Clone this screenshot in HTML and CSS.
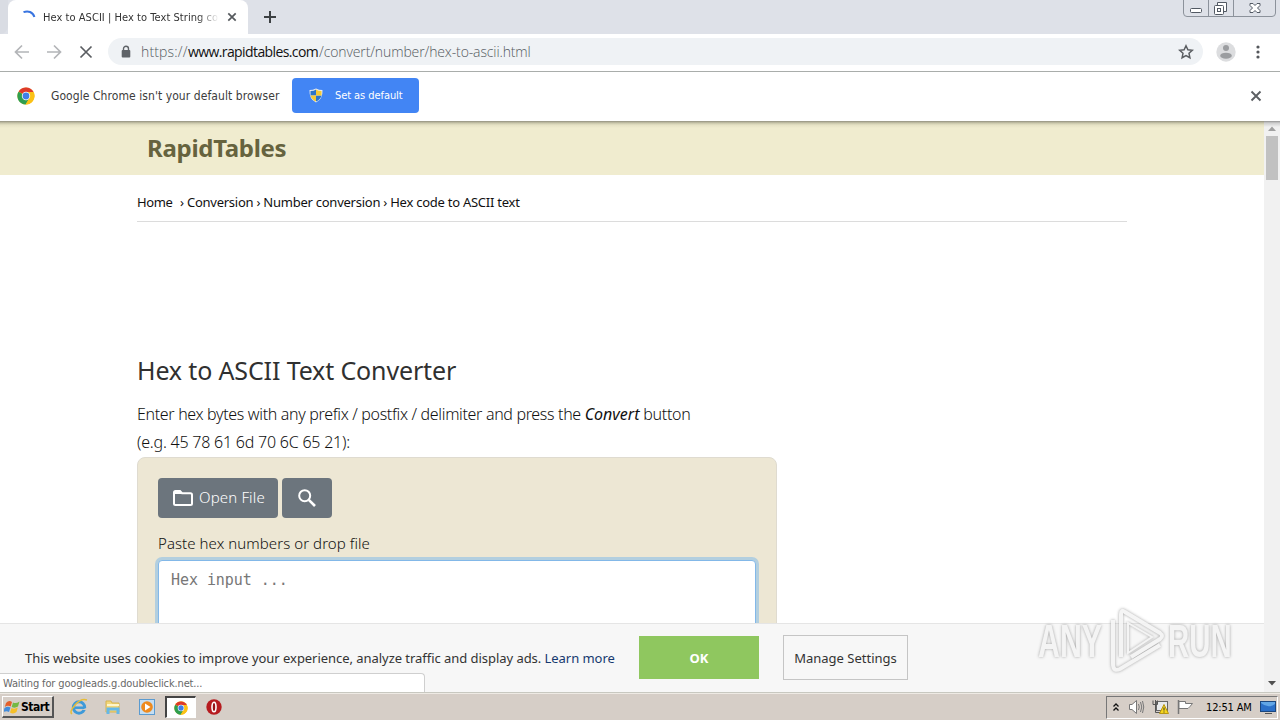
FILE: index.html
```html
<!DOCTYPE html>
<html lang="en">
<head>
<meta charset="utf-8">
<title>Hex to ASCII | Hex to Text String converter</title>
<link rel="stylesheet" href="styles.css">
</head>
<body>
<svg class="defs" width="0" height="0">
  <symbol id="chrome" viewBox="0 0 18 18">
    <circle cx="9" cy="9" r="8.600" fill="#fbc116"/>
    <path d="M9 9 1.600 4.600A8.600 8.600 0 0 1 16.500 5Z" fill="#dd3a2b"/>
    <path d="M9 9 1.500 4.700A8.600 8.600 0 0 0 8.600 17.600L12.600 10.800Z" fill="#2f9e4f"/>
    <path d="M9 5H16.500A8.600 8.600 0 0 1 8.600 17.600L12.600 10.800Z" fill="#fbc116"/>
    <circle cx="9" cy="9" r="4.200" fill="#fff"/><circle cx="9" cy="9" r="3.400" fill="#3f7fe8"/>
  </symbol>
</svg>
<div class="screen">
  <header class="tabstrip">
    <div class="edge"></div>
    <div class="tab">
      <svg class="spinner" width="14" height="14"><path d="M1.500 2.200C6 .3 11 2 12.400 7" fill="none" stroke="#3874e0" stroke-width="2"/></svg>
      <span class="tab-title">Hex to ASCII | Hex to Text String co</span>
      <svg class="tab-close" width="10" height="10"><path d="M1.300 1.300l7.400 7.400M8.700 1.300L1.300 8.700" stroke="#55595d" stroke-width="1.700"/></svg>
    </div>
    <div class="newtab"><svg width="12" height="12"><path d="M6 0v12M0 6h12" stroke="#3c4043" stroke-width="2"/></svg></div>
    <div class="win-controls">
      <svg width="97" height="17" fill="none">
        <path d="M.5 0V13Q.5 16.500 4 16.500H89Q92.500 16.500 92.500 13V0M25.500 0V16M50.500 0V16" stroke="#8c929b"/>
        <g stroke="#525963"><rect x="7.500" y="8.500" width="11" height="4" rx="1" fill="#fff"/>
        <path d="M34.500 5V2.500H43.500V11.500H41" fill="#fff"/><rect x="31.500" y="5.500" width="9" height="9" rx="1" fill="#fff"/><rect x="34.500" y="8.500" width="3" height="3"/>
        <path d="M67 3.500h3l2 2 2-2h3v2l-2.500 2.500 2.500 2.500v2h-3l-2-2-2 2h-3v-2l2.500-2.500-2.500-2.500z" fill="#fff"/></g>
      </svg>
    </div>
  </header>
  <div class="toolbar">
    <svg class="nav" width="96" height="20" fill="none" stroke-width="1.700">
      <path d="M15 10H2M8 3.500L1.500 10 8 16.500M33 10H46M40 3.500L46.500 10 40 16.500" stroke="#b3b5b8"/>
      <path d="M66.500 4.500L77.500 15.500M77.500 4.500L66.500 15.500" stroke="#5a5d61"/>
    </svg>
    <div class="omnibox">
      <svg class="lock" width="10" height="13"><path d="M2.500 6V3.800a2.500 2.500 0 0 1 5 0V6" fill="none" stroke="#5f6368" stroke-width="1.400"/><rect x=".7" y="5" width="8.600" height="7.500" rx="1" fill="#5f6368"/></svg>
      <span class="url"><span class="scheme">https://</span><b>www.rapidtables.com</b><span class="path">/convert/number/hex-to-ascii.html</span></span>
      <svg class="star" width="16" height="16"><path d="M8 1.800l1.900 4 4.400.5-3.300 3 .9 4.400L8 11.500l-3.900 2.200.9-4.400-3.300-3 4.400-.5z" fill="none" stroke="#5a5d61" stroke-width="1.500"/></svg>
    </div>
    <svg class="avatar" width="20" height="20"><circle cx="10" cy="10" r="9.700" fill="#dcdddf"/><circle cx="10" cy="6" r="3" fill="#9b9da0"/><ellipse cx="10" cy="13.700" rx="5.800" ry="3" fill="#9b9da0"/></svg>
    <svg class="kebab" width="4" height="14" fill="#54575b"><circle cx="2" cy="2" r="1.600"/><circle cx="2" cy="7" r="1.600"/><circle cx="2" cy="12" r="1.600"/></svg>
  </div>
  <div class="infobar">
    <svg class="info-logo" width="18" height="18"><use href="#chrome"/></svg>
    <span class="info-text">Google Chrome isn't your default browser</span>
    <div class="set-default">
      <svg width="14" height="15"><path d="M7 .4Q10 2 13.500 2Q14 11 7 14.600Q0 11 .5 2Q4 2 7 .4" fill="#e9edf0"/><path d="M7 1.500V7.500H1.500V3Q5 3 7 1.500M7 7.500H12.500Q11.500 11.500 7 13.600Z" fill="#2d75c9"/><path d="M7 1.500V7.500H12.500V3Q9 3 7 1.500M7 7.500H1.500Q2.500 11.500 7 13.600Z" fill="#f5ca35"/></svg>
      <span>Set as default</span>
    </div>
    <svg class="info-close" width="12" height="12"><path d="M1.500 1.500l9 9M10.500 1.500l-9 9" stroke="#5c5f63" stroke-width="1.900"/></svg>
  </div>
  <div class="viewport">
    <main class="page">
      <div class="site-header"><span class="brand">RapidTables</span></div>
      <div class="container">
        <nav class="crumbs"><span class="home">Home</span><span>› Conversion › Number conversion › Hex code to ASCII text</span></nav>
        <h1>Hex to ASCII Text Converter</h1>
        <p class="intro"><span class="l1">Enter hex bytes with any prefix / postfix / delimiter and press the <i>Convert</i> button</span><br><span class="l2">(e.g. 45 78 61 6d 70 6C 65 21):</span></p>
        <div class="form">
          <div class="buttons">
            <div class="btn open"><svg width="20" height="16"><path d="M1 14V2.500Q1 1 2.500 1H7L9 3.200H17.500Q19 3.200 19 4.700V13.500Q19 15 17.500 15H2.500Q1 15 1 13.500" fill="none" stroke="#fff" stroke-width="2"/><path d="M1 1.500H7L9 4H1z" fill="#fff"/></svg><span>Open File</span></div>
            <div class="btn search"><svg width="18" height="18" fill="none" stroke="#fff" stroke-width="2"><circle cx="6.700" cy="6.700" r="5.500"/><path d="M10.800 10.800L17 17" stroke-width="2.600"/></svg></div>
          </div>
          <div class="label">Paste hex numbers or drop file</div>
          <div class="input">Hex input ...</div>
        </div>
      </div>
    </main>
    <div class="scrollbar">
      <svg width="16" height="15"><path d="M4 10L8 5.500 12 10z" fill="#a0a0a0"/></svg>
      <div class="thumb"></div>
      <svg class="down" width="16" height="16"><path d="M4 5H12L8 9.500z" fill="#505050"/></svg>
    </div>
    <div class="cookies">
      <span class="cookie-text">This website uses cookies to improve your experience, analyze traffic and display ads. <a>Learn more</a></span>
      <div class="ok">OK</div>
      <div class="manage"><span>Manage Settings</span></div>
    </div>
    <div class="status"><span>Waiting for googleads.g.doubleclick.net...</span></div>
    <div class="watermark">
      <span class="wm any">ANY</span>
      <svg class="wm-logo" width="62" height="66" fill="none" stroke="#f4f4f4" stroke-width="4"><path d="M15 49V6Q15 1 19 4L54 25Q58 28 54 31L25 49"/><path d="M7 12V56Q7 64 14 61L54 37"/><path d="M22 45V15L46 29Z" stroke-width="2"/></svg>
      <span class="wm run">RUN</span>
    </div>
  </div>
  <footer class="taskbar">
    <div class="start"><svg width="17" height="16"><path d="M2 4Q5 .5 8 3L6.700 7.500Q3.500 6 .8 8z" fill="#e4602b"/><path d="M9 3.500Q12 5 15.500 2.500L14 7.500Q11 9.500 7.700 8z" fill="#74b943"/><path d="M.5 9Q3.500 7 6.500 8.500L5 13Q2.500 11.500-.5 13z" fill="#438cdb"/><path d="M7.500 9Q10.500 10.500 13.800 8.500L12.500 13Q9.500 15.500 6 13.500z" fill="#f5bf28"/></svg><span>Start</span></div>
    <div class="quick">
      <svg width="18" height="18"><circle cx="9" cy="9.500" r="5.700" fill="none" stroke="#3e9ad9" stroke-width="3"/><path d="M5 9.700H15" stroke="#3e9ad9" stroke-width="2.500"/><path d="M11 12H17V9.800z" fill="#d4cec7"/><path d="M2 16Q-1 14 5 7T17 2" fill="none" stroke="#e7bd38" stroke-width="1.500"/></svg>
      <svg width="18" height="18"><path d="M2 3H7L8 5H15V14H2z" fill="#f2d77b" stroke="#d7b34f"/><path d="M3 7H15" stroke="#fff5c9" stroke-width="2"/><path d="M4 16V11H14V16" fill="none" stroke="#65b8e8" stroke-width="3"/></svg>
      <svg width="18" height="18"><rect x="1.500" y="1.500" width="15" height="15" fill="#c5def2" stroke="#5b9bd0"/><circle cx="9" cy="9" r="5.800" fill="#ee8a1e"/><path d="M7 5.500L12.500 9 7 12.500z" fill="#fff"/></svg>
    </div>
    <div class="task-active"><svg width="14" height="14"><use href="#chrome"/></svg></div>
    <svg class="opera" width="16" height="16"><circle cx="8" cy="8" r="7.700" fill="#b61b1f"/><ellipse cx="8" cy="8" rx="2" ry="4.800" fill="#971216" stroke="#fff" stroke-width="1.600"/></svg>
    <div class="tray">
      <svg width="8" height="11" fill="none" stroke="#111" stroke-width="1.300"><path d="M1.500 4.500L4 2 6.500 4.500M1.500 8.500L4 6 6.500 8.500"/></svg>
      <svg width="17" height="16" fill="none" stroke="#777"><path d="M1.500 5.500H4L8.500 1.500V14.500L4 10.500H1.500z" fill="#fff"/><path d="M10.500 5Q12 8 10.500 11M12.500 3Q15 8 12.500 13M14.500 2Q17 8 14.500 14"/></svg>
      <svg width="18" height="16"><rect x="4.500" y="2.500" width="11" height="9" fill="#e8eaec" stroke="#666"/><path d="M1 1.500V5.500H5.500V1.500M3.500 1V13.500H8" fill="none" stroke="#555"/><path d="M12 5.500L16.500 14.500H7.500z" fill="#f6d51d" stroke="#b89612"/><path d="M12 8.500v3M12 12.500v1" stroke="#333"/></svg>
      <svg width="17" height="16"><path d="M1.500 1V15" stroke="#777" stroke-width="1.500"/><path d="M2 2.500H8.500V4.500H15.500L13 7.500Q12 10.500 7 9.500H2z" fill="#fff" stroke="#777"/></svg>
      <span class="clock">12:51 AM</span>
      <svg class="desktop" width="16" height="15"><rect x=".5" y="1.500" width="15" height="10" fill="#2c70c8" stroke="#1b477f"/><path d="M1 3Q8 9 15 4V2H1z" fill="#62a6e6"/><path d="M5 13.500H12" stroke="#555"/></svg>
    </div>
  </footer>
</div>
</body>
</html>
```
FILE: styles.css
```css
* { box-sizing: border-box; }
body { margin: 0; font-family: "Noto Sans", sans-serif; }
svg { display: block; flex: none; }
.defs { position: absolute; }
span { white-space: nowrap; }
.screen { width: 1280px; height: 720px; display: flex; flex-direction: column; overflow: hidden; background: #fff; color: #222; }

.tabstrip { height: 34px; flex: none; display: flex; background: #dee1e8; }
.edge { width: 8px; background: #d9dce3; border-bottom-right-radius: 8px; }
.tab { width: 240px; height: 34px; display: flex; align-items: center; padding-left: 14px; background: #fff; border-radius: 8px 8px 0 0; font: 11px "DejaVu Sans Condensed", sans-serif; }
.tab-title { width: 176px; margin-left: 7px; overflow: hidden; letter-spacing: .05px; color: #333; -webkit-mask-image: linear-gradient(90deg, #000 88%, transparent); mask-image: linear-gradient(90deg, #000 88%, transparent); }
.tab-close { margin-left: 8px; }
.newtab { padding: 11px 0 0 16px; }
.win-controls { margin-left: auto; }

.toolbar { height: 38px; flex: none; display: flex; align-items: center; padding: 0 0 2px 14px; border-bottom: 1px solid #a9adab; }
.omnibox { width: 1095px; height: 27px; margin-left: -2px; padding: 0 9px 0 13px; display: flex; align-items: center; border-radius: 14px; background: #eff2f5; }
.url { display: flex; margin-left: 10px; font: 300 14px "Open Sans", sans-serif; color: #555b61; }
.url b { width: 131px; font-weight: 400; letter-spacing: -.6px; color: #111; }
.scheme { width: 47px; letter-spacing: .15px; }
.path { letter-spacing: -.12px; }
.star { margin-left: auto; }
.avatar { margin-left: 13px; }
.kebab { margin-left: 20px; }

.infobar { height: 49px; flex: none; display: flex; align-items: center; padding: 0 18px 2px 17px; }
.info-text { width: 229px; margin-left: 16px; font: 12px "DejaVu Sans Condensed", sans-serif; letter-spacing: .07px; color: #3c3c3c; }
.set-default { width: 127px; height: 35px; margin-left: 12px; padding: 0 0 1px 17px; display: flex; align-items: center; gap: 12px; border-radius: 4px; background: #4285f4; color: #fff; font: 11px "DejaVu Sans Condensed", sans-serif; letter-spacing: -.07px; }
.info-close { margin-left: auto; }

.viewport { position: relative; height: 572px; flex: none; display: flex; overflow: hidden; border-bottom: 1px solid #c8c8c0; }
.page { width: 1264px; height: 571px; overflow: hidden; }
.site-header { height: 54px; padding: 0 147px; background: linear-gradient(#929080 0, #c8c5a9 2px, #e5e1c4 4px, #f0eccf 7px); }
.brand { font: 700 24px/54px "Noto Sans", sans-serif; letter-spacing: -.3px; color: #66633e; }
.container { width: 990px; margin-left: 137px; }
.crumbs { height: 47px; display: flex; gap: 8px; border-bottom: 1px solid #dcdcdc; font-size: 13px; line-height: 54px; color: #111; letter-spacing: -.25px; }
.home { width: 35px; letter-spacing: -.4px; }
h1 { margin: 130px 0 0; height: 36px; font: 400 25px/37px "Noto Sans", sans-serif; letter-spacing: -.14px; color: #303030; white-space: nowrap; }
.intro { margin: 12px 0 0; height: 57px; font: 300 16px/28px "Noto Sans", sans-serif; color: #111; }
.l1 { letter-spacing: -.33px; }
.l2 { letter-spacing: -.22px; }
.intro i { font-weight: 400; letter-spacing: 0; }
.form { width: 640px; height: 300px; padding: 20px; border: 1px solid #dfdbd0; border-radius: 8px; background: #ede7d4; }
.buttons { display: flex; gap: 4px; }
.btn { height: 40px; border-radius: 4px; background: #6c757d; color: #fff; display: flex; align-items: center; font: 300 15px "Noto Sans", sans-serif; letter-spacing: .15px; }
.btn span { padding-bottom: 2px; }
.open { width: 120px; padding-left: 15px; gap: 6px; }
.search { width: 50px; padding-left: 16px; }
.label { margin-top: 11px; font: 300 15px/28px "Noto Sans", sans-serif; letter-spacing: .07px; white-space: nowrap; color: #111; }
.input { width: 598px; height: 180px; margin-top: 3px; padding: 7px 12px; border: 1px solid #83b8e8; border-radius: 4px; box-shadow: 0 0 0 3px #b3cfdf; background: #fff; font: 15px/24px "DejaVu Sans Mono", monospace; letter-spacing: -.06px; color: #777; }
.scrollbar { width: 16px; height: 571px; display: flex; flex-direction: column; background: linear-gradient(#929292 0, #cecece 2px, #f1f1f1 6px); }
.thumb { width: 12px; height: 44px; margin-left: 2px; background: #c1c1c1; }
.down { margin-top: auto; }
.cookies { position: absolute; left: 0; bottom: 0; width: 1264px; height: 69px; display: flex; align-items: center; padding: 0 0 1px 25px; border-top: 1px solid #e5e5e5; background: #f7f7f7; font-size: 13px; color: #333; }
.cookie-text { width: 590px; letter-spacing: -.045px; }
.cookie-text a { color: #16396f; }
.ok { width: 120px; height: 43px; margin-left: 24px; background: #8fc75f; color: #fff; font-weight: 700; line-height: 44px; text-align: center; }
.manage { width: 125px; height: 45px; margin-left: 24px; border: 1px solid #c5c5c5; line-height: 44px; text-align: center; }
.status { position: absolute; left: 0; bottom: 0; width: 425px; height: 19px; padding-left: 3px; border: solid #cfcfcf; border-width: 1px 1px 0 0; border-top-right-radius: 4px; background: #fff; font: 11px/20px "DejaVu Sans Condensed", sans-serif; letter-spacing: -.14px; color: #686868; }
.watermark { position: absolute; left: 1038px; top: 487px; display: flex; align-items: center; opacity: .9; filter: drop-shadow(0 0 1.5px #999); }
.wm { font: 700 46px/60px "Liberation Sans", sans-serif; color: #f4f4f4; transform-origin: 0 50%; }
.wm-logo { margin-left: 1px; }
.any { width: 67px; transform: scaleX(.66); }
.run { width: 64px; transform: scaleX(.64); }

.taskbar { height: 27px; flex: none; display: flex; align-items: center; border-top: 1px solid #eeeae4; background: #d6cec7; }
.start { width: 52px; height: 22px; margin-left: 2px; display: flex; align-items: center; padding-left: 1px; gap: 0; border: solid; border-width: 1px 2px 2px 1px; border-color: #fff #555 #555 #fff; font: 700 12px "DejaVu Sans Condensed", sans-serif; letter-spacing: -.5px; color: #000; }
.quick { display: flex; gap: 16px; margin-left: 16px; }
.task-active { width: 31px; height: 22px; margin-left: 9px; display: flex; align-items: center; justify-content: center; border: solid; border-width: 2px 1px 1px 2px; border-color: #444 #fff #fff #444; background: #fff; }
.opera { margin-left: 10px; }
.tray { width: 172px; height: 23px; margin-left: auto; margin-right: 2px; display: flex; align-items: center; padding-left: 5px; border: 1px solid; border-color: #777 #fff #fff #777; gap: 7px; }
.clock { width: 48px; margin-left: 5px; font: 11px "DejaVu Sans Condensed", sans-serif; letter-spacing: -.15px; color: #000; }
.tray > svg:first-child { margin-right: 1px; }
.desktop { margin-left: -1px; }
```
